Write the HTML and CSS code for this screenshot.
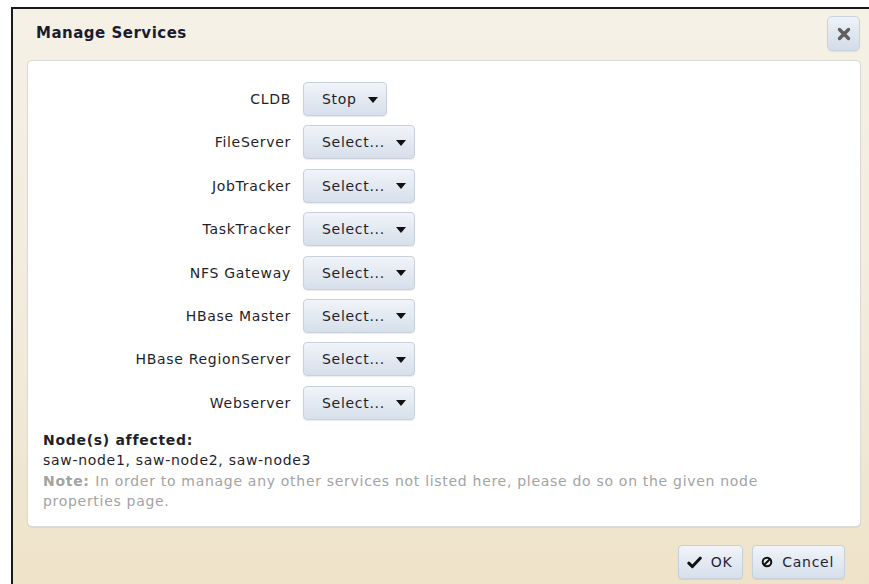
FILE: index.html
```html
<!DOCTYPE html>
<html lang="en">
<head>
<meta charset="utf-8">
<title>Manage Services</title>
<link rel="stylesheet" href="styles.css">
</head>
<body>
<div class="dialog">
  <div class="dialog-header">
    <h1 class="dialog-title">Manage Services</h1>
    <button class="close-btn" type="button" aria-label="Close">
      <svg width="14" height="14" viewBox="0 0 14 14"><path d="M2.5 2.5 L11.5 11.5 M11.5 2.5 L2.5 11.5" stroke="#5f5f5f" stroke-width="3.4" stroke-linecap="round"/></svg>
    </button>
  </div>

  <div class="panel">
    <div class="service-grid">
      <span class="svc-label">CLDB</span>
      <button class="menu-btn" type="button">Stop <svg class="caret" width="10" height="6" viewBox="0 0 10 6"><path d="M0 0 H10 L5 6 Z" fill="#111"/></svg></button>

      <span class="svc-label">FileServer</span>
      <button class="menu-btn" type="button">Select... <svg class="caret" width="10" height="6" viewBox="0 0 10 6"><path d="M0 0 H10 L5 6 Z" fill="#111"/></svg></button>

      <span class="svc-label">JobTracker</span>
      <button class="menu-btn" type="button">Select... <svg class="caret" width="10" height="6" viewBox="0 0 10 6"><path d="M0 0 H10 L5 6 Z" fill="#111"/></svg></button>

      <span class="svc-label">TaskTracker</span>
      <button class="menu-btn" type="button">Select... <svg class="caret" width="10" height="6" viewBox="0 0 10 6"><path d="M0 0 H10 L5 6 Z" fill="#111"/></svg></button>

      <span class="svc-label">NFS Gateway</span>
      <button class="menu-btn" type="button">Select... <svg class="caret" width="10" height="6" viewBox="0 0 10 6"><path d="M0 0 H10 L5 6 Z" fill="#111"/></svg></button>

      <span class="svc-label">HBase Master</span>
      <button class="menu-btn" type="button">Select... <svg class="caret" width="10" height="6" viewBox="0 0 10 6"><path d="M0 0 H10 L5 6 Z" fill="#111"/></svg></button>

      <span class="svc-label">HBase RegionServer</span>
      <button class="menu-btn" type="button">Select... <svg class="caret" width="10" height="6" viewBox="0 0 10 6"><path d="M0 0 H10 L5 6 Z" fill="#111"/></svg></button>

      <span class="svc-label">Webserver</span>
      <button class="menu-btn" type="button">Select... <svg class="caret" width="10" height="6" viewBox="0 0 10 6"><path d="M0 0 H10 L5 6 Z" fill="#111"/></svg></button>
    </div>

    <div class="nodes">
      <div class="nodes-title">Node(s) affected:</div>
      <div class="nodes-list">saw-node1, saw-node2, saw-node3</div>
      <p class="note"><b class="note-lead">Note: </b>In order to manage any other services not listed here, please do so on the given node properties page.</p>
    </div>
  </div>

  <div class="dialog-footer">
    <button class="action-btn" type="button">
      <svg width="15" height="13" viewBox="0 0 15 13"><path d="M1.8 7.2 L5.4 10.6 L13.2 2.2" fill="none" stroke="#111" stroke-width="3" stroke-linecap="round" stroke-linejoin="round"/></svg>
      OK
    </button>
    <button class="action-btn" type="button">
      <svg width="12" height="12" viewBox="0 0 12 12"><circle cx="6" cy="6" r="4.3" fill="none" stroke="#111" stroke-width="2"/><path d="M3 9 L9 3" stroke="#111" stroke-width="2"/></svg>
      Cancel
    </button>
  </div>
</div>
</body>
</html>
```

FILE: styles.css
```css
html, body {
  margin: 0;
  padding: 0;
  background: #ffffff;
  overflow: hidden;
}

body {
  font-family: "DejaVu Sans", "Noto Sans", sans-serif;
  font-size: 14px;
  letter-spacing: 0.7px;
  color: #1f1f2a;
}

.dialog {
  margin: 7px 0 0 11px;
  height: 600px;
  border-top: 2px solid #1a1a1a;
  border-left: 2px solid #1a1a1a;
  background: linear-gradient(#f5f1e6 0%, #f1eadb 60%, #eee2c6 100%);
  display: flex;
  flex-direction: column;
}

/* header bar with title and close button */
.dialog-header {
  display: flex;
  align-items: center;
  justify-content: space-between;
  padding: 7px 9px 9px 23px;
}

.dialog-title {
  margin: 0 0 2px 0;
  font-size: 15px;
  letter-spacing: 0.5px;
  font-weight: bold;
  color: #1b1b30;
}

.close-btn {
  width: 33px;
  height: 35px;
  padding: 0;
  border: 1px solid #c9d2df;
  border-radius: 5px;
  background: linear-gradient(#eef2f8, #d3dcea);
  box-shadow: 0 1px 1px rgba(0, 0, 0, 0.08);
  display: flex;
  align-items: center;
  justify-content: center;
}

/* white content panel */
.panel {
  margin: 0 8px 0 14px;
  height: 467px;
  box-sizing: border-box;
  padding: 21px 16px 0 15px;
  background: #ffffff;
  border: 1px solid #d9d9d6;
  border-radius: 5px;
  box-shadow: 0 1px 1px rgba(0, 0, 0, 0.06);
}

.service-grid {
  display: grid;
  grid-template-columns: 248px auto;
  column-gap: 12px;
  row-gap: 9.4px;
  align-items: center;
  justify-items: start;
}

.svc-label {
  justify-self: end;
  white-space: nowrap;
}

.menu-btn {
  height: 34px;
  display: inline-flex;
  align-items: center;
  gap: 11px;
  padding: 0 8px 0 18px;
  font-family: inherit;
  font-size: 14px;
  letter-spacing: 0.7px;
  color: #1f1f2a;
  border: 1px solid #c8d0dc;
  border-radius: 4px;
  background: linear-gradient(#f1f4f9, #d6dfeb);
  box-shadow: 0 1px 1px rgba(0, 0, 0, 0.08);
}

.menu-btn .caret {
  margin-top: 1px;
}

.nodes {
  margin-top: 10px;
  line-height: 20.5px;
}

.nodes-title {
  font-weight: bold;
}

.note {
  margin: 0;
  max-width: 735px;
  color: #a3a3a3;
}

.note-lead {
  font-weight: bold;
}

/* footer buttons */
.dialog-footer {
  display: flex;
  justify-content: flex-end;
  gap: 9px;
  padding: 18px 24px 0 0;
}

.action-btn {
  height: 34px;
  display: inline-flex;
  align-items: center;
  gap: 9px;
  padding: 0 10px 0 8px;
  font-family: inherit;
  font-size: 14px;
  letter-spacing: 0.7px;
  color: #1f1f3a;
  border: 1px solid #c8d0dc;
  border-radius: 4px;
  background: linear-gradient(#f1f4f9, #d6dfeb);
  box-shadow: 0 1px 1px rgba(0, 0, 0, 0.08);
}
```
